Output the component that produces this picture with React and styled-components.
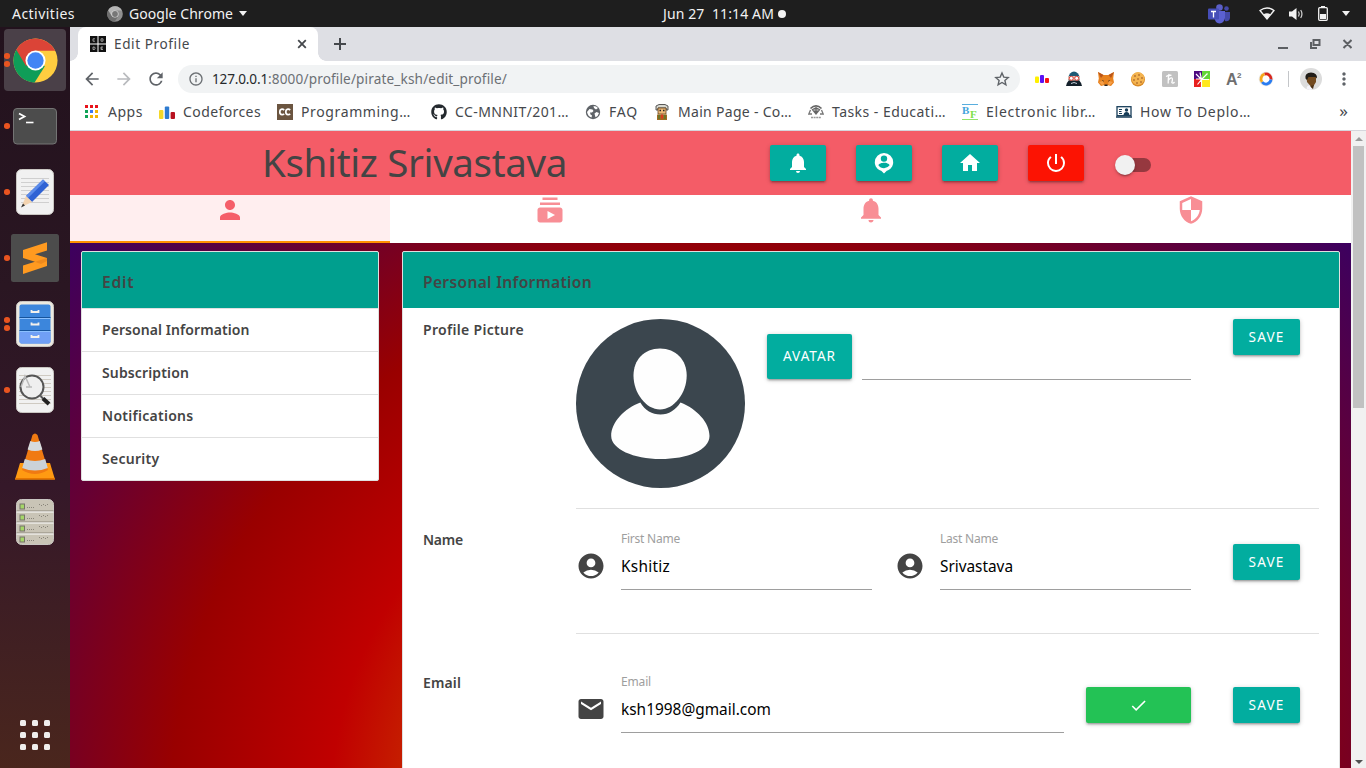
import React, { useLayoutEffect, useRef } from "react";
import styled, { createGlobalStyle, css } from "styled-components";
import {
  MdPerson, MdSubscriptions, MdSecurity, MdNotifications, MdHome,
  MdPowerSettingsNew, MdAccountCircle, MdEmail, MdCheck,
  MdArrowBack, MdArrowForward, MdRefresh, MdInfoOutline, MdMoreVert,
} from "react-icons/md";
import { FaGithub } from "react-icons/fa";

const Global = createGlobalStyle`
  * { box-sizing: border-box; }
  html, body { margin: 0; padding: 0; overflow: hidden; }
  body { font-family: "Noto Sans", "Open Sans", sans-serif; }
  svg { display: block; flex: none; }
`;

/* ---------- text that tracks itself to a given measure ---------- */
const Run = styled.span`
  display: block;
  flex: none;
  white-space: pre;
  width: ${(p) => p.$w}px;
`;

function Fit({ w, children, className }) {
  const ref = useRef(null);
  useLayoutEffect(() => {
    const el = ref.current;
    const range = document.createRange();
    el.style.letterSpacing = "0px";
    range.selectNodeContents(el);
    const natural = range.getBoundingClientRect().width;
    el.style.letterSpacing = `${(w - natural) / children.length}px`;
  }, [w, children]);
  return <Run ref={ref} $w={w} className={className}>{children}</Run>;
}

/* ---------- desktop shell ---------- */
const Desktop = styled.div`
  width: 1366px;
  height: 768px;
  display: flex;
  flex-direction: column;
  overflow: hidden;
  background: #fff;
`;

const TopBar = styled.header`
  height: 27px;
  flex: none;
  display: grid;
  grid-template-columns: 663px 1fr auto;
  align-items: center;
  padding-right: 16px;
  background: #1e1e1e;
  color: #f2f2f2;
  font-size: 14px;
  line-height: 26px;
`;
const TopLeft = styled.div`
  display: flex;
  align-items: center;
  padding-left: 12px;
`;
const AppMenu = styled.div`
  display: flex;
  align-items: center;
  gap: 6px;
  margin-left: 32px;
`;
const Clock = styled.div`
  display: flex;
  align-items: center;
  gap: 4px;
`;
const NoticeDot = styled.i`
  width: 8px;
  height: 8px;
  border-radius: 50%;
  background: #f4f4f4;
`;
const Tray = styled.div`
  display: flex;
  align-items: center;
  gap: 14px;
  > :first-child { margin-right: 15px; }
`;
const Caret = styled.i`
  border: 4.5px solid transparent;
  border-top: 5px solid #f2f2f2;
  border-bottom: 0;
`;

const Body = styled.div`
  flex: 1;
  min-height: 0;
  display: flex;
`;

const Dock = styled.nav`
  width: 70px;
  flex: none;
  display: flex;
  flex-direction: column;
  gap: 4px;
  padding: 2px 4px 2px;
  background: linear-gradient(#22121d, #2a1622 35%, #351829 62%, #4a261d);
`;
const DockItem = styled.div`
  display: flex;
  align-items: center;
  height: 62px;
  border-radius: 4px;
  background: ${(p) => (p.$active ? "#4a4048" : "transparent")};
  ${(p) => p.$last && css`margin-top: auto;`}
`;
const Marks = styled.div`
  width: 6px;
  flex: none;
  display: flex;
  flex-direction: column;
  gap: 2.6px;
  i {
    width: 5.6px;
    height: 5.6px;
    border-radius: 50%;
    background: #e95420;
  }
`;
const DockIcon = styled.div`
  width: 50px;
  display: grid;
  place-items: center;
`;
const AppsGrid = styled.div`
  display: grid;
  grid-template-columns: repeat(3, 6px);
  gap: 6px;
  i {
    height: 6px;
    border-radius: 1.5px;
    background: #f0efee;
  }
`;

/* ---------- browser ---------- */
const Browser = styled.section`
  flex: 1;
  min-width: 0;
  display: flex;
  flex-direction: column;
`;
const TabStrip = styled.div`
  height: 34px;
  flex: none;
  display: flex;
  align-items: center;
  padding: 0 14px 0 8px;
  background: #dedfe4;
  color: #45484c;
`;
const Tab = styled.div`
  position: relative;
  width: 240px;
  height: 34px;
  display: flex;
  align-items: center;
  padding: 0 9px 0 12px;
  border-radius: 8px 8px 0 0;
  background: #fff;
  color: #45484c;
  font-size: 13.6px;
  &::before, &::after {
    content: "";
    position: absolute;
    bottom: 0;
    width: 8px;
    height: 8px;
  }
  &::before { left: -8px; background: radial-gradient(circle at 0 0, #dedfe4 7.5px, #fff 8px); }
  &::after { right: -8px; background: radial-gradient(circle at 100% 0, #dedfe4 7.5px, #fff 8px); }
`;
const TabTitle = styled(Fit)`
  margin-left: 8px;
  margin-right: auto;
  padding-bottom: 2px;
`;
const NewTab = styled.div`
  margin-left: 12px;
  margin-right: auto;
`;

const Toolbar = styled.div`
  height: 36px;
  flex: none;
  display: flex;
  align-items: center;
  padding: 0 12px 0 12px;
  color: #5f6368;
`;
const NavButtons = styled.div`
  display: flex;
  gap: 12px;
  margin-right: 12px;
`;
const Omnibox = styled.div`
  width: 843px;
  height: 28px;
  display: flex;
  align-items: center;
  padding: 0 10px;
  border-radius: 14px;
  background: #f1f3f4;
  font-size: 13.6px;
  color: #6c7074;
`;
const Host = styled(Fit)`
  margin-left: 8px;
  padding-bottom: 2px;
  color: #26292c;
`;
const Path = styled(Fit)`
  margin-right: auto;
  padding-bottom: 2px;
`;
const Extensions = styled.div`
  display: flex;
  align-items: center;
  gap: 16px;
  margin-left: 14px;
`;
const ToolDivider = styled.i`
  width: 1px;
  height: 16px;
  margin: 0 11px 0 14px;
  background: #c4c6c9;
`;
const Account = styled.div`
  display: flex;
  align-items: center;
  gap: 12px;
`;

const Bookmarks = styled.div`
  height: 34px;
  flex: none;
  display: flex;
  align-items: center;
  padding: 0 18px 4px 14px;
  border-bottom: 1px solid #d5d6dc;
  font-size: 14px;
  color: #45484c;
`;
const Bookmark = styled.div`
  display: flex;
  align-items: center;
  gap: 8px;
  margin-right: ${(p) => p.$after ?? 16}px;
`;
const More = styled.span`
  margin-left: auto;
  padding-bottom: 2px;
  line-height: 16px;
  font-size: 17px;
`;

const Viewport = styled.div`
  flex: 1;
  min-height: 0;
  display: flex;
`;

const ScrollBar = styled.div`
  width: 15px;
  flex: none;
  display: flex;
  flex-direction: column;
  align-items: center;
  justify-content: space-between;
  padding: 6px 0 4px;
  background: #f1f1f1;
`;
const Thumb = styled.div`
  width: 11px;
  height: 262px;
  margin: 5px 0 auto;
  background: #c1c1c1;
`;
const ScrollArrow = styled.i`
  border: 4px solid transparent;
  ${(p) => (p.$up
    ? css`border-bottom-color: #9b9b9b; border-top: 0;`
    : css`border-top-color: #505050; border-bottom: 0;`)}
`;

/* ---------- page ---------- */
const Page = styled.main`
  flex: 1;
  min-width: 0;
  overflow: hidden;
  display: flex;
  flex-direction: column;
  color: #444;
  background: radial-gradient(circle at 640px 677px, #cc4400 220px, #c00000 380px, #990000 539px, #660033 698px, #3b0060 857px);
`;
const Banner = styled.div`
  height: 64px;
  flex: none;
  display: grid;
  grid-template-columns: 192px 508px auto;
  align-items: center;
  background: #f45c67;
`;
const Name = styled(Fit)`
  grid-column: 2;
  font-size: 38.5px;
  line-height: 62px;
  padding-bottom: 2px;
`;
const Actions = styled.div`
  display: flex;
  align-items: center;
  gap: 30px;
`;
const Button = styled.button`
  display: flex;
  align-items: center;
  justify-content: center;
  width: ${(p) => p.$w ?? 67}px;
  height: ${(p) => p.$h ?? 36}px;
  padding: 0;
  border: 0;
  border-radius: 2px;
  background: ${(p) => p.$color ?? "#02ad9f"};
  box-shadow: 0 2px 2px 0 rgba(0,0,0,.14), 0 3px 1px -2px rgba(0,0,0,.12), 0 1px 5px 0 rgba(0,0,0,.2);
  color: #fff;
  font-family: inherit;
  font-size: 13.6px;
`;
const ButtonText = styled(Fit)`
  padding-bottom: 2px;
`;
const Switch = styled.div`
  width: 36px;
  height: 14px;
  margin: 4px 0 0 1px;
  display: flex;
  align-items: center;
  border-radius: 15px;
  background: linear-gradient(90deg, transparent 5px, #96383f 5px);
  &::before {
    content: "";
    width: 20px;
    height: 20px;
    border-radius: 50%;
    background: #f1f1f1;
    box-shadow: 0 3px 1px -2px rgba(0,0,0,.2), 0 2px 2px 0 rgba(0,0,0,.14), 0 1px 5px 0 rgba(0,0,0,.12);
  }
`;
const Tabs = styled.div`
  height: 48px;
  flex: none;
  display: grid;
  grid-template-columns: repeat(4, 1fr);
  background: #fff;
`;
const PageTab = styled.div`
  display: flex;
  justify-content: center;
  color: ${(p) => (p.$active ? "#f55e69" : "#f88e95")};
  background: ${(p) => (p.$active ? "#ffeeef" : "transparent")};
  border-bottom: 2px solid ${(p) => (p.$active ? "#ff9100" : "transparent")};
`;
const Columns = styled.div`
  display: grid;
  grid-template-columns: 298px 938px;
  gap: 23px;
  align-items: start;
  padding: 8px 11px 0;
`;
const Card = styled.section`
  border: 1px solid #e0e0e0;
  border-radius: 2px;
  background: #fff;
  overflow: hidden;
`;
const CardHead = styled.div`
  height: 56px;
  display: flex;
  align-items: center;
  padding: 4px 19px 0 20px;
  background: #009f8e;
  font-size: 15.6px;
  font-weight: 600;
`;
const MenuItem = styled.div`
  height: 43px;
  display: flex;
  align-items: center;
  padding: 0 0 2px 20px;
  border-top: 1px solid #e0e0e0;
  font-size: 14px;
  font-weight: 600;
`;
const Section = styled.div`
  display: grid;
  grid-template-columns: 153px 743px;
  height: ${(p) => p.$h}px;
  padding-left: 20px;
`;
const SectionLabel = styled(Fit)`
  margin-top: ${(p) => p.$top ?? 20}px;
  font-size: 14px;
  font-weight: 600;
  line-height: 22px;
`;
const Fields = styled.div`
  display: flex;
  align-items: flex-start;
  padding: ${(p) => p.$pad};
  border-bottom: 1px solid #e0e0e0;
`;
const FilePath = styled.div`
  width: 329px;
  height: 61px;
  margin: 0 42px 0 10px;
  border-bottom: 1px solid #9e9e9e;
`;
const AvatarButton = styled(Button)`
  margin: 15px 0 0 22px;
`;
const InputIcon = styled.div`
  width: 45.5px;
  padding-top: 21px;
  margin-left: ${(p) => p.$ml ?? -0.5}px;
  color: #444;
`;
const Input = styled.div`
  width: ${(p) => p.$w}px;
  height: 60px;
  border-bottom: 1px solid #9e9e9e;
  font-size: 15.4px;
  line-height: 38px;
  color: #000;
`;
const InputLabel = styled(Fit)`
  font-size: 12px;
  line-height: 18px;
  color: #9e9e9e;
`;
const Push = styled.div`
  display: flex;
  gap: 42px;
  margin: 14px 19px 0 auto;
`;

/* ---------- drawings ---------- */
const Pin = () => (
  <svg width="24" height="24" viewBox="0 0 24 24">
    <path fill="#fff" fillRule="evenodd" d="M12 2a9.200 9.200 0 0 0-9.200 9.200c0 4 2.700 7.400 6.400 8.600L12 22.400l2.800-2.600c3.700-1.200 6.400-4.600 6.400-8.600A9.200 9.200 0 0 0 12 2zm0 2.400a3.200 3.200 0 1 1 0 6.400 3.200 3.200 0 0 1 0-6.400zm0 12.800c-2.300 0-4.400-1.100-5.600-2.900.1-1.800 3.700-2.600 5.600-2.600s5.500.8 5.600 2.600a6.700 6.700 0 0 1-5.600 2.900z" />
  </svg>
);
const Cross = () => (
  <svg width="14" height="14" viewBox="0 0 14 14">
    <path d="m3.200 3.200 7.600 7.600M10.800 3.200l-7.600 7.600" stroke="#45484c" strokeWidth="1.800" />
  </svg>
);
const Plus = () => (
  <svg width="20" height="20" viewBox="0 0 20 20">
    <path d="M10 4v12M4 10h12" stroke="#45484c" strokeWidth="2" />
  </svg>
);
const Star = () => (
  <svg width="16" height="16" viewBox="0 0 16 16">
    <path d="m8 2 1.800 4.100 4.400.4-3.300 2.900 1 4.400L8 11.500l-3.900 2.300 1-4.400-3.300-2.900 4.400-.4z" fill="none" stroke="#5f6368" strokeWidth="1.400" />
  </svg>
);
const Chrome = ({ size, grey }) => {
  const c = grey ? ["#b5b5b5", "#6f6f6f", "#8f8f8f", "#dcdcdc", "#777"] : ["#db4437", "#0f9d58", "#ffcd40", "#fff", "#4285f4"];
  return (
    <svg width={size} height={size} viewBox="0 0 48 48">
      <circle cx="24" cy="24" r="23.500" fill={c[2]} />
      <path fill={c[1]} d="M24 24 3.500 12.500A23.500 23.500 0 0 0 23 47.500L34 30z" />
      <path fill={c[0]} d="M3.500 12.500A23.500 23.500 0 0 1 45 13.500H24L14 30z" />
      <circle cx="24" cy="24" r="10.700" fill={c[3]} />
      <circle cx="24" cy="24" r="8.700" fill={c[4]} />
    </svg>
  );
};
const Terminal = () => (
  <svg width="44" height="37" viewBox="0 0 44 37">
    <rect x=".5" y=".5" width="43" height="35.500" rx="3.500" fill="#4c4c4c" stroke="#747474" />
    <path d="m6 5.500 5.500 3L6 11.500" fill="none" stroke="#fff" strokeWidth="1.800" />
    <path d="M13 14.500h7.500" stroke="#fff" strokeWidth="1.600" />
  </svg>
);
const Sheet = ({ children, fill = "#f1f1f1" }) => (
  <svg width="38" height="46" viewBox="0 0 38 46">
    <rect x=".5" y=".5" width="37" height="45" rx="5" fill={fill} stroke="#c9c6c2" />
    {children}
  </svg>
);
const Editor = () => (
  <Sheet>
    <path d="M5 9.500h28M5 13.500h28M5 17.500h28M5 21.500h28M5 25.500h28M5 29.500h28M5 33.500h28" stroke="#cfcfcf" />
    <path d="M27 10.500 33 16 16 33l-6-6z" fill="#2f62d4" />
    <path d="M27 10.500 29 12.300 12 29l-2-2z" fill="#5b8bea" />
    <path d="m10 27 6 6-10.500 5z" fill="#f2d3b0" />
    <path d="m7 34.500 2 2-4 2z" fill="#333" />
  </Sheet>
);
const Sublime = () => (
  <svg width="48" height="48" viewBox="0 0 48 48">
    <rect width="48" height="48" rx="2.500" fill="#4c4c4c" />
    <path fill="#ff9a20" d="M12 16 36 8.300v8.200l-12 3.800L36 24v8l-24 8v-8.500l12-3.800L12 24z" />
    <path fill="#e27f1c" d="m14 24.600 10 3.100 6.500-2 5.500-1.700v3l-6 3z" opacity=".6" />
  </svg>
);
const Cabinet = () => (
  <Sheet fill="#ece9e0">
    <rect x="3.500" y="3.500" width="31" height="39" rx="2" fill="#3c86dc" />
    <rect x="3.500" y="30" width="31" height="12.500" rx="2" fill="#709ff5" />
    <path d="M3.500 16.500h31M3.500 29.500h31" stroke="#17549c" />
    <path d="M3.500 17.500h31M3.500 30.500h31" stroke="#8bc0ff" />
    {[10, 22.5, 35].map((y) => <path key={y} d={`M15.500 ${y - 1}v2h7v-2`} fill="none" stroke="#f3f1ec" strokeWidth="1.800" />)}
  </Sheet>
);
const Viewer = () => (
  <Sheet>
    <path d="M3 8.500h32M3 12.500h32M3 16.500h32M3 20.500h32M3 24.500h32M3 28.500h32M3 32.500h32M3 36.500h32" stroke="#cfcac2" />
    <circle cx="16" cy="20" r="11.500" fill="#efefef" stroke="#555" strokeWidth="2" />
    <path d="m5 20 4-11 5 11M10 20h6" stroke="#bbb" strokeWidth="1.500" fill="none" />
    <path d="m24.500 29 3 3" stroke="#555" strokeWidth="2" />
    <path d="m27 31.500 6 5.500" stroke="#222" strokeWidth="4" />
  </Sheet>
);
const Cone = () => (
  <svg width="42" height="47" viewBox="0 0 42 47">
    <path d="m6 30-5 16.500h40L36 30z" fill="#ff9a12" />
    <path d="M1.500 45h39l.5 1.500H1z" fill="#e57500" />
    <path d="M8 37 18.500 2q2.500-3 5 0L34 37q-13 8-26 0z" fill="#f07a12" />
    <path d="m16.300 8-2.700 8.500q7.400 3 14.800 0L25.700 8q-4.700 2-9.400 0z" fill="#d6dade" />
    <path d="m10.800 26-2.600 9q12.800 5 25.600 0l-2.600-9q-10.200 4-20.400 0z" fill="#cbd2d8" />
  </svg>
);
const Server = () => (
  <Sheet fill="#c9c4b6">
    {[0, 1, 2, 3].map((i) => (
      <g key={i} transform={`translate(0 ${i * 11})`}>
        {i > 0 && <path d="M.5 1h37" stroke="#8d887c" />}
        {i > 0 && <path d="M.5 2h37" stroke="#fff" />}
        <rect x="4" y="5" width="4.500" height="5" fill="#a5d668" stroke="#77736a" />
        <path d="M11 8.500h8" stroke="#89857a" strokeDasharray="1 1" />
        <path d="M23 5.500h10M25 6.500h6" stroke="#89857a" strokeDasharray="1 3" />
      </g>
    ))}
  </Sheet>
);
const Teams = () => (
  <svg width="22" height="20" viewBox="0 0 22 20">
    <circle cx="11.500" cy="3.500" r="3.300" fill="#5b5fc7" /><circle cx="18.500" cy="4.500" r="2.300" fill="#4449a8" />
    <path d="M16 8h6v6q-1 4-5 3z" fill="#4449a8" /><path d="M7 7h10v7q-1 5-5.500 5.500Q7 19 6.500 14z" fill="#5b60d0" />
    <rect y="4.500" width="11" height="11" rx="1" fill="#464eb8" /><path d="M3 7.500h5M5.500 7.500v6" stroke="#fff" strokeWidth="1.300" />
  </svg>
);
const Wifi = () => (
  <svg width="16" height="13" viewBox="0 0 16 13">
    <path d="M1 3.500Q8-1.500 15 3.500L8 12z" fill="none" stroke="#f2f2f2" strokeWidth="1.300" /><path d="M4.500 7.200q3.500-2 7 0L8 12z" fill="#f2f2f2" />
  </svg>
);
const Volume = () => (
  <svg width="15" height="14" viewBox="0 0 15 14">
    <path d="M0 4.500h3L7.500 1v12L3 9.500H0z" fill="#f2f2f2" /><path d="M9.500 4.500q1.500 2.500 0 5M11.700 3q2.500 4 0 8" fill="none" stroke="#d5d5d5" strokeWidth="1.200" />
  </svg>
);
const Battery = () => (
  <svg width="10" height="15" viewBox="0 0 10 15">
    <path d="M3 0h4v2H3z" fill="#f2f2f2" /><rect x=".7" y="1.700" width="8.600" height="12.600" rx="1" fill="none" stroke="#f2f2f2" strokeWidth="1.300" /><path d="M2 8h6v5H2z" fill="#f2f2f2" />
  </svg>
);
const WindowButtons = () => (
  <svg width="76" height="14" viewBox="0 0 76 14" fill="none" stroke="#5c5f63" strokeWidth="2">
    <path d="M2 11h10" />
    <path d="M37.500 3h6v5h-6zM35 5v6h6M67.500 3l8 8M75.500 3l-8 8" />
  </svg>
);
const CodeTile = () => (
  <svg width="16" height="16" viewBox="0 0 16 16">
    <path d="M0 0h7.500v7.500H0zM8.500 0H16v7.500H8.500zM0 8.500h7.500V16H0zM8.500 8.500H16V16H8.500z" fill="#111" />
    <path d="M5 2.800H3v2.400h2M11 2.800h2v2.400h-2zM3 11h1.500l.7 1.200-.7 1.300H3zM13 11h-2v2.500h2M11 12.200h1.500" fill="none" stroke="#bbb" strokeWidth=".8" />
  </svg>
);
const AppsIcon = () => (
  <svg width="16" height="14" viewBox="-1 0 16 14">
    {["#e8131b", "#e8131b", "#e8131b", "#10a256", "#3b78f0", "#f4b400", "#10a256", "#f4b400", "#f4b400"].map((f, i) => (
      <rect key={i} x={(i % 3) * 5} y={Math.floor(i / 3) * 5} width="3" height="3" fill={f} />
    ))}
  </svg>
);
const Bars = () => (
  <svg width="16" height="16" viewBox="0 0 16 16">
    <rect y="6" width="4.400" height="9" rx="1" fill="#f4d728" /><rect x="5.800" y="2.500" width="4.400" height="12.500" rx="1" fill="#2e7bd0" /><rect x="11.600" y="8" width="4.400" height="7" rx="1" fill="#b81220" />
  </svg>
);
const MiniBars = () => (
  <svg width="16" height="16" viewBox="0 0 16 16">
    <rect x="1" y="5.500" width="4" height="6.500" rx="1" fill="#fff000" /><rect x="6" y="4" width="4" height="8" rx="1" fill="#5a12f5" /><rect x="11" y="7" width="4" height="5" rx="1" fill="#f81414" />
  </svg>
);
const CcTile = () => (
  <svg width="16" height="16" viewBox="0 0 16 16">
    <rect width="16" height="16" fill="#6b5540" />
    <path d="M7.200 6q-1-.9-2.300-.8Q2.800 5.500 2.800 8t2.200 2.700q1.200.1 2.200-.8M13.200 6q-1-.9-2.300-.8Q8.800 5.500 8.800 8t2.200 2.700q1.200.1 2.200-.8" fill="none" stroke="#fff" strokeWidth="1.700" />
  </svg>
);
const Globe = () => (
  <svg width="16" height="16" viewBox="-.5 -.5 16 16">
    <circle cx="7.500" cy="7.500" r="7.200" fill="#5f6368" /><path d="M1.500 7.500 4 4.500l3 .5 1 1.500-1.500 1.500H4.500L5 10l1.500 1-.5 2q-3.500-1-4.500-5.500zM8 1.500q3 0 4.500 2L10.500 5 8.500 3.500zM9 9l2-1.500 2.500 1q-.7 3-3.500 4.200L9.500 11z" fill="#fff" />
  </svg>
);
const Scientist = () => (
  <svg width="16" height="16" viewBox="0 0 16 16">
    <path d="M2 5V2l3-1.500h6L14 2v4h-2V4H4v2H2z" fill="#d8d8d0" stroke="#333" strokeWidth=".8" /><path d="M4 4h8v6H4z" fill="#edb978" stroke="#63411c" strokeWidth=".8" />
    <path d="M5.500 6.500h1.500M9 6.500h1.500" stroke="#222" strokeWidth="1.300" /><path d="M3 10.500h10V16H3z" fill="#a06a20" /><path d="M7 10.500h2v4H7z" fill="#d83a20" /><path d="M5 11v4M11 11v4" stroke="#4a7b33" strokeWidth="1.200" />
  </svg>
);
const Emblem = () => (
  <svg width="16" height="15" viewBox="0 0 16 15">
    <path d="M2.500 4.500Q8-1 13.500 4.500" fill="none" stroke="#666" strokeWidth="1.700" /><path d="M3.500 5.500 8 3l4.500 2.500L8 11z" fill="#666" /><path d="M2.500 6 .8 10H4M13.500 6l1.700 4H12" fill="none" stroke="#777" strokeWidth="1.300" />
    <path d="M3 13.500h10" stroke="#999" strokeWidth="1.300" strokeDasharray="2 .6" /><path d="M5.500 6h2M8.500 6h2" stroke="#ddd" />
  </svg>
);
const Bf = () => (
  <svg width="16" height="16" viewBox="0 0 16 16">
    <path d="M0 .5h16" stroke="#59aede" /><path d="M0 15.500h16" stroke="#92e368" />
    <text x="0" y="10" fontFamily="Liberation Serif, serif" fontWeight="700" fontSize="11" fill="#43a4dc">B</text>
    <text x="8" y="13.500" fontFamily="Liberation Serif, serif" fontWeight="700" fontSize="11" fill="#7ddf4c">F</text>
  </svg>
);
const Board = () => (
  <svg width="16" height="12" viewBox="0 0 16 12">
    <rect x="1" y=".7" width="14" height="9" fill="#fff" stroke="#173d59" strokeWidth="1.300" /><path d="M0 11h16" stroke="#173d59" strokeWidth="1.500" />
    <path d="M3 3.500h3M3 5.500h2.500M3 7.500h3" stroke="#173d59" /><circle cx="10.500" cy="4" r="1.700" fill="#173d59" /><path d="M7.500 9.500q0-3.500 3-3.500t3 3.500z" fill="#173d59" />
  </svg>
);
const Ninja = () => (
  <svg width="16" height="16" viewBox="0 0 16 16">
    <path d="M2 9Q2 5 4 2.500 8-1.500 12 2.500 14 5 14 9z" fill="#1e5a75" /><path d="M0 15q1-4 3-6h10q2 2 3 6z" fill="#14202b" /><rect x="2" y="5" width="12" height="4.500" rx="2" fill="#f0c0ac" />
    <circle cx="5.300" cy="7.300" r="2" fill="#fff" stroke="#d63f37" /><circle cx="10.700" cy="7.300" r="2" fill="#fff" stroke="#d63f37" /><path d="M5 12.500q3-2 6 0" stroke="#c7d3dc" fill="none" />
  </svg>
);
const Fox = () => (
  <svg width="16" height="15" viewBox="0 0 16 15">
    <path d="M0 0 5.500 3h5L16 0l-.8 6.500.8 4-3 3.500-3-.8L8.800 14H7.200L6 13.200l-3 .8-3-3.500.8-4z" fill="#e8821e" /><path d="M0 0 5.500 3 3 6zM16 0l-5.500 3L13 6z" fill="#b9551a" /><path d="m4 8 2 1-1 .8zM12 8l-2 1 1 .8zM6.500 12.500h3V14h-3z" fill="#222" /><path d="m1 10 4-1 1 3-2 1zM15 10l-4-1-1 3 2 1z" fill="#f5a04a" />
  </svg>
);
const Cookie = () => (
  <svg width="16" height="16" viewBox="0 0 16 16">
    <circle cx="8" cy="8.500" r="7" fill="#d98a26" /><circle cx="8" cy="7.500" r="6.500" fill="#f4b450" />
    {[[5, 5], [9, 4], [12, 7], [4, 9], [8, 8], [11, 11], [7, 12]].map(([x, y]) => <circle key={`${x}-${y}`} cx={x} cy={y} r=".8" fill="#8f4a1c" />)}
  </svg>
);
const Honey = () => (
  <svg width="16" height="16" viewBox="0 0 16 16">
    <rect width="16" height="16" rx="1.500" fill="#c1c1c1" /><path d="M7 3q-1 4-.8 9.500M6.500 9q2-2.500 3.300-2t0 4.500q1 1.500 2.700-.5M4 5.500q3-1.500 5.500-1.200" fill="none" stroke="#fff" strokeWidth="1.300" />
  </svg>
);
const Burst = () => (
  <svg width="16" height="16" viewBox="0 0 16 16">
    <path d="M0 0h8v8H0z" fill="#4d0a80" /><path d="M8 0h8v8H8z" fill="#62d636" /><path d="M0 8h8v8H0z" fill="#e8201e" /><path d="M8 8h8v8H8z" fill="#ffe81d" />
    <path d="m7.500 8.500 6-6M7.500 8.500 2 3M7.500 8.500 6 1.500M8 8.500h7M7.500 8.500l-4 5M7.500 8v8M7.500 8H2" stroke="#fff" strokeWidth="1.200" />
  </svg>
);
const ASquare = () => (
  <svg width="16" height="20" viewBox="0 0 16 20">
    <text x="0" y="15.500" fontFamily="Liberation Sans, sans-serif" fontWeight="700" fontSize="16" fill="#6f6f6f">A</text>
    <text x="11" y="8.500" fontFamily="Liberation Sans, sans-serif" fontWeight="700" fontSize="8" fill="#6f6f6f">2</text>
  </svg>
);
const Ring = () => (
  <svg width="16" height="16" viewBox="0 0 16 16" fill="none" strokeWidth="2.800">
    <circle cx="8" cy="8" r="6.800" stroke="#e6e6e6" strokeWidth="1" /><path d="M6.500 3.200A5 5 0 0 1 13 8.500" stroke="#d9271c" /><path d="M13 8.500A5 5 0 0 1 4 11" stroke="#2a7cf0" /><path d="M4 11A5 5 0 0 1 6.500 3.200" stroke="#f5a91d" />
  </svg>
);
const Face = () => (
  <svg width="22" height="22" viewBox="0 0 22 22">
    <circle cx="11" cy="11" r="11" fill="#dcdcdc" /><path d="M6.500 8h9.500v6l-2.500 4h-3l-3.500-4z" fill="#724a1f" /><path d="M5.500 10.500Q4.500 5 11 4.500 17.500 5 17 10.500L15.500 9H8.500L7 12z" fill="#211d18" /><path d="m10 18 4-1-1 4q-2 0-3-3z" fill="#4c3015" /><path d="M6.500 20.500Q7 17 9.500 17.500l3 3.500q-3 2-6-.5z" fill="#f4f4fa" />
  </svg>
);
const ProfilePicture = () => (
  <svg width="169" height="169" viewBox="0 0 169 169">
    <circle cx="84.500" cy="84.500" r="84.500" fill="#3b464e" />
    <path fill="#fefefe" d="M84 29.500c16 0 26.700 11.500 26.700 27C110.700 74 98 90.500 84 90.500S57.500 74 57.500 56.500c0-15.500 10.500-27 26.500-27z" />
    <path fill="#fefefe" d="M64.300 83.500C69 91.500 76 95.500 84.500 95.500S99.500 91 104.500 83.500C121 90 133.500 103.500 133.500 117c0 14-22 23-49 23s-49.300-10-49.300-23c0-14 13.500-27.500 29.100-33.500z" />
  </svg>
);

const dockApps = [
  { id: "chrome", icon: <Chrome size={45} />, marks: 2, active: true },
  { id: "terminal", icon: <Terminal />, marks: 1 },
  { id: "editor", icon: <Editor />, marks: 1 },
  { id: "sublime", icon: <Sublime />, marks: 1 },
  { id: "files", icon: <Cabinet />, marks: 2 },
  { id: "viewer", icon: <Viewer />, marks: 1 },
  { id: "vlc", icon: <Cone />, marks: 0 },
  { id: "server", icon: <Server />, marks: 0 },
];

const bookmarks = [
  { icon: <AppsIcon />, label: "Apps", w: 35 },
  { icon: <Bars />, label: "Codeforces", w: 78 },
  { icon: <CcTile />, label: "Programming…", w: 110, after: 20 },
  { icon: <FaGithub size={16} color="#24292e" />, label: "CC-MNNIT/201…", w: 114 },
  { icon: <Globe />, label: "FAQ", w: 29 },
  { icon: <Scientist />, label: "Main Page - Co…", w: 114 },
  { icon: <Emblem />, label: "Tasks - Educati…", w: 114 },
  { icon: <Bf />, label: "Electronic libr…", w: 110, after: 20 },
  { icon: <Board />, label: "How To Deplo…", w: 111 },
];

const menu = [["Personal Information", 147.5], ["Subscription", 87], ["Notifications", 91.5], ["Security", 57.5]];

const Save = () => <Button><ButtonText w={36}>SAVE</ButtonText></Button>;

function Field({ label, labelW, value, valueW, w }) {
  return (
    <Input $w={w}>
      <InputLabel w={labelW}>{label}</InputLabel>
      <Fit w={valueW}>{value}</Fit>
    </Input>
  );
}

export default function App() {
  return (
    <Desktop>
      <Global />
      <TopBar>
        <TopLeft>
          <Fit w={63}>Activities</Fit>
          <AppMenu>
            <Chrome size={16} grey />
            <Fit w={104}>Google Chrome</Fit>
            <Caret />
          </AppMenu>
        </TopLeft>
        <Clock><Fit w={111}>Jun 27  11:14 AM</Fit><NoticeDot /></Clock>
        <Tray>
          <Teams />
          <Wifi />
          <Volume />
          <Battery />
          <Caret />
        </Tray>
      </TopBar>
      <Body>
        <Dock>
          {dockApps.map((a) => (
            <DockItem key={a.id} $active={a.active}>
              <Marks>{Array.from({ length: a.marks }, (_, i) => <i key={i} />)}</Marks>
              <DockIcon>{a.icon}</DockIcon>
            </DockItem>
          ))}
          <DockItem $last>
            <Marks />
            <DockIcon><AppsGrid>{Array.from({ length: 9 }, (_, i) => <i key={i} />)}</AppsGrid></DockIcon>
          </DockItem>
        </Dock>
        <Browser>
          <TabStrip>
            <Tab>
              <CodeTile />
              <TabTitle w={76}>Edit Profile</TabTitle>
              <Cross />
            </Tab>
            <NewTab><Plus /></NewTab>
            <WindowButtons />
          </TabStrip>
          <Toolbar>
            <NavButtons>
              <MdArrowBack size={20} />
              <MdArrowForward size={20} color="#b9bbbe" />
              <MdRefresh size={20} />
            </NavButtons>
            <Omnibox>
              <MdInfoOutline size={16} />
              <Host w={56}>127.0.0.1</Host>
              <Path w={239}>:8000/profile/pirate_ksh/edit_profile/</Path>
              <Star />
            </Omnibox>
            <Extensions>
              <MiniBars /><Ninja /><Fox /><Cookie /><Honey /><Burst /><ASquare /><Ring />
            </Extensions>
            <ToolDivider />
            <Account>
              <Face />
              <MdMoreVert size={20} />
            </Account>
          </Toolbar>
          <Bookmarks>
            {bookmarks.map((b) => (
              <Bookmark key={b.label} $after={b.after}>{b.icon}<Fit w={b.w}>{b.label}</Fit></Bookmark>
            ))}
            <More>»</More>
          </Bookmarks>
          <Viewport>
            <Page>
              <Banner>
                <Name w={305}>Kshitiz Srivastava</Name>
                <Actions>
                  <Button $w={56}><MdNotifications size={24} /></Button>
                  <Button $w={56}><Pin /></Button>
                  <Button $w={56}><MdHome size={24} /></Button>
                  <Button $w={56} $color="#fc1303"><MdPowerSettingsNew size={24} /></Button>
                  <Switch />
                </Actions>
              </Banner>
              <Tabs>
                <PageTab $active><MdPerson size={30} /></PageTab>
                <PageTab><MdSubscriptions size={30} /></PageTab>
                <PageTab><MdNotifications size={30} /></PageTab>
                <PageTab><MdSecurity size={30} /></PageTab>
              </Tabs>
              <Columns>
                <Card>
                  <CardHead><Fit w={32.5}>Edit</Fit></CardHead>
                  {menu.map(([label, w]) => <MenuItem key={label}><Fit w={w}>{label}</Fit></MenuItem>)}
                </Card>
                <Card>
                  <CardHead><Fit w={169}>Personal Information</Fit></CardHead>
                  <Section $h={201}>
                    <SectionLabel w={101} $top={11}>Profile Picture</SectionLabel>
                    <Fields $pad="11px 0 0">
                      <ProfilePicture />
                      <AvatarButton $w={85} $h={45}><ButtonText w={53}>AVATAR</ButtonText></AvatarButton>
                      <FilePath />
                      <Save />
                    </Fields>
                  </Section>
                  <Section $h={125}>
                    <SectionLabel w={40}>Name</SectionLabel>
                    <Fields $pad="21px 0 0">
                      <InputIcon><MdAccountCircle size={30} /></InputIcon>
                      <Field w={251} label="First Name" labelW={59} value="Kshitiz" valueW={49} />
                      <InputIcon $ml={22.5}><MdAccountCircle size={30} /></InputIcon>
                      <Field w={251} label="Last Name" labelW={58} value="Srivastava" valueW={73} />
                      <Push><Save /></Push>
                    </Fields>
                  </Section>
                  <Section $h={180}>
                    <SectionLabel w={38} $top={38}>Email</SectionLabel>
                    <Fields $pad="39px 0 0">
                      <InputIcon><MdEmail size={30} /></InputIcon>
                      <Field w={443} label="Email" labelW={30} value="ksh1998@gmail.com" valueW={150} />
                      <Push>
                        <Button $w={105} $color="#23c255"><MdCheck size={19} /></Button>
                        <Save />
                      </Push>
                    </Fields>
                  </Section>
                </Card>
              </Columns>
            </Page>
            <ScrollBar>
              <ScrollArrow $up />
              <Thumb />
              <ScrollArrow />
            </ScrollBar>
          </Viewport>
        </Browser>
      </Body>
    </Desktop>
  );
}
